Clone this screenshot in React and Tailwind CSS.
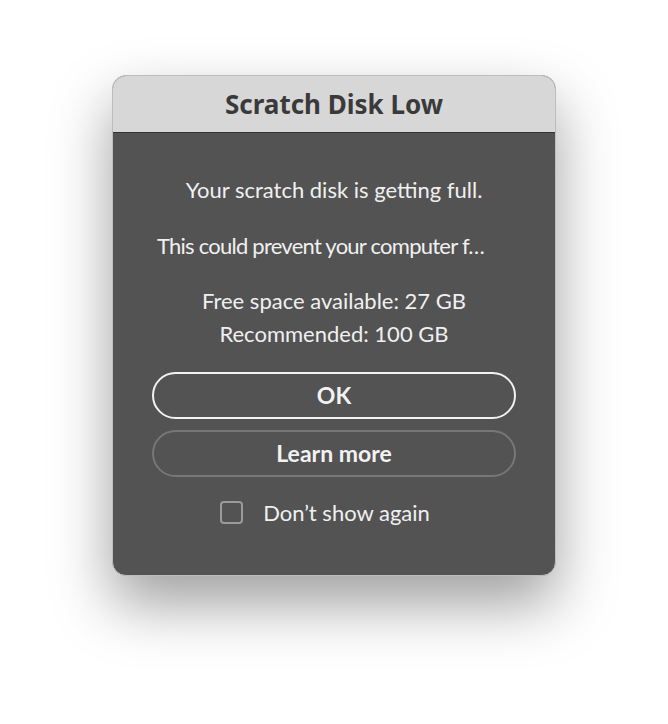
import React, { useState } from 'react';

const bodyFont = { fontFamily: 'Lato, "Noto Sans", sans-serif' };

export default function App() {
  const [dontShow, setDontShow] = useState(false);

  return (
    <div className="w-[668px] h-[724px] bg-white pt-[75px] pl-[112px]" style={bodyFont}>
      <div className="w-[444px] h-[501px] rounded-[14px] overflow-hidden bg-[#535353] flex flex-col shadow-[0_28px_60px_rgba(0,0,0,0.38)] border border-[#bdbdbd]">
        {/* Title bar */}
        <div className="h-[57px] shrink-0 bg-[#d7d7d7] border-b border-[#333] flex items-center justify-center">
          <h1 className="text-[26px] leading-[32px] font-bold text-[#3a3a3a] font-['Noto_Sans',sans-serif]">Scratch Disk Low</h1>
        </div>

        {/* Body */}
        <div className="flex flex-col items-center px-[39px] pt-[40px] text-[#f0f0f0] text-[22px] leading-[33px]">
          <p>Your scratch disk is getting full.</p>
          <p className="mt-[23px] w-full pr-[27px] text-center whitespace-nowrap tracking-[-0.75px]">This could prevent your computer f…</p>
          <p className="mt-[22px]">Free space available: 27 GB</p>
          <p>Recommended: 100 GB</p>

          <button className="mt-[22px] w-full h-[47px] rounded-full border-2 border-[#f2f2f2] text-[23px] font-bold text-[#f2f2f2]">
            OK
          </button>
          <button className="mt-[11px] w-full h-[47px] rounded-full border-2 border-[#777] text-[23px] font-bold text-[#f2f2f2]">
            Learn more
          </button>

          <label className="mt-[19px] mr-[18px] flex items-center gap-[20px] cursor-pointer">
            <input
              type="checkbox"
              checked={dontShow}
              onChange={(e) => setDontShow(e.target.checked)}
              className="appearance-none w-[23px] h-[23px] rounded-[4px] border-2 border-[#9a9a9a] bg-transparent"
            />
            <span>Don’t show again</span>
          </label>
        </div>
      </div>
    </div>
  );
}
